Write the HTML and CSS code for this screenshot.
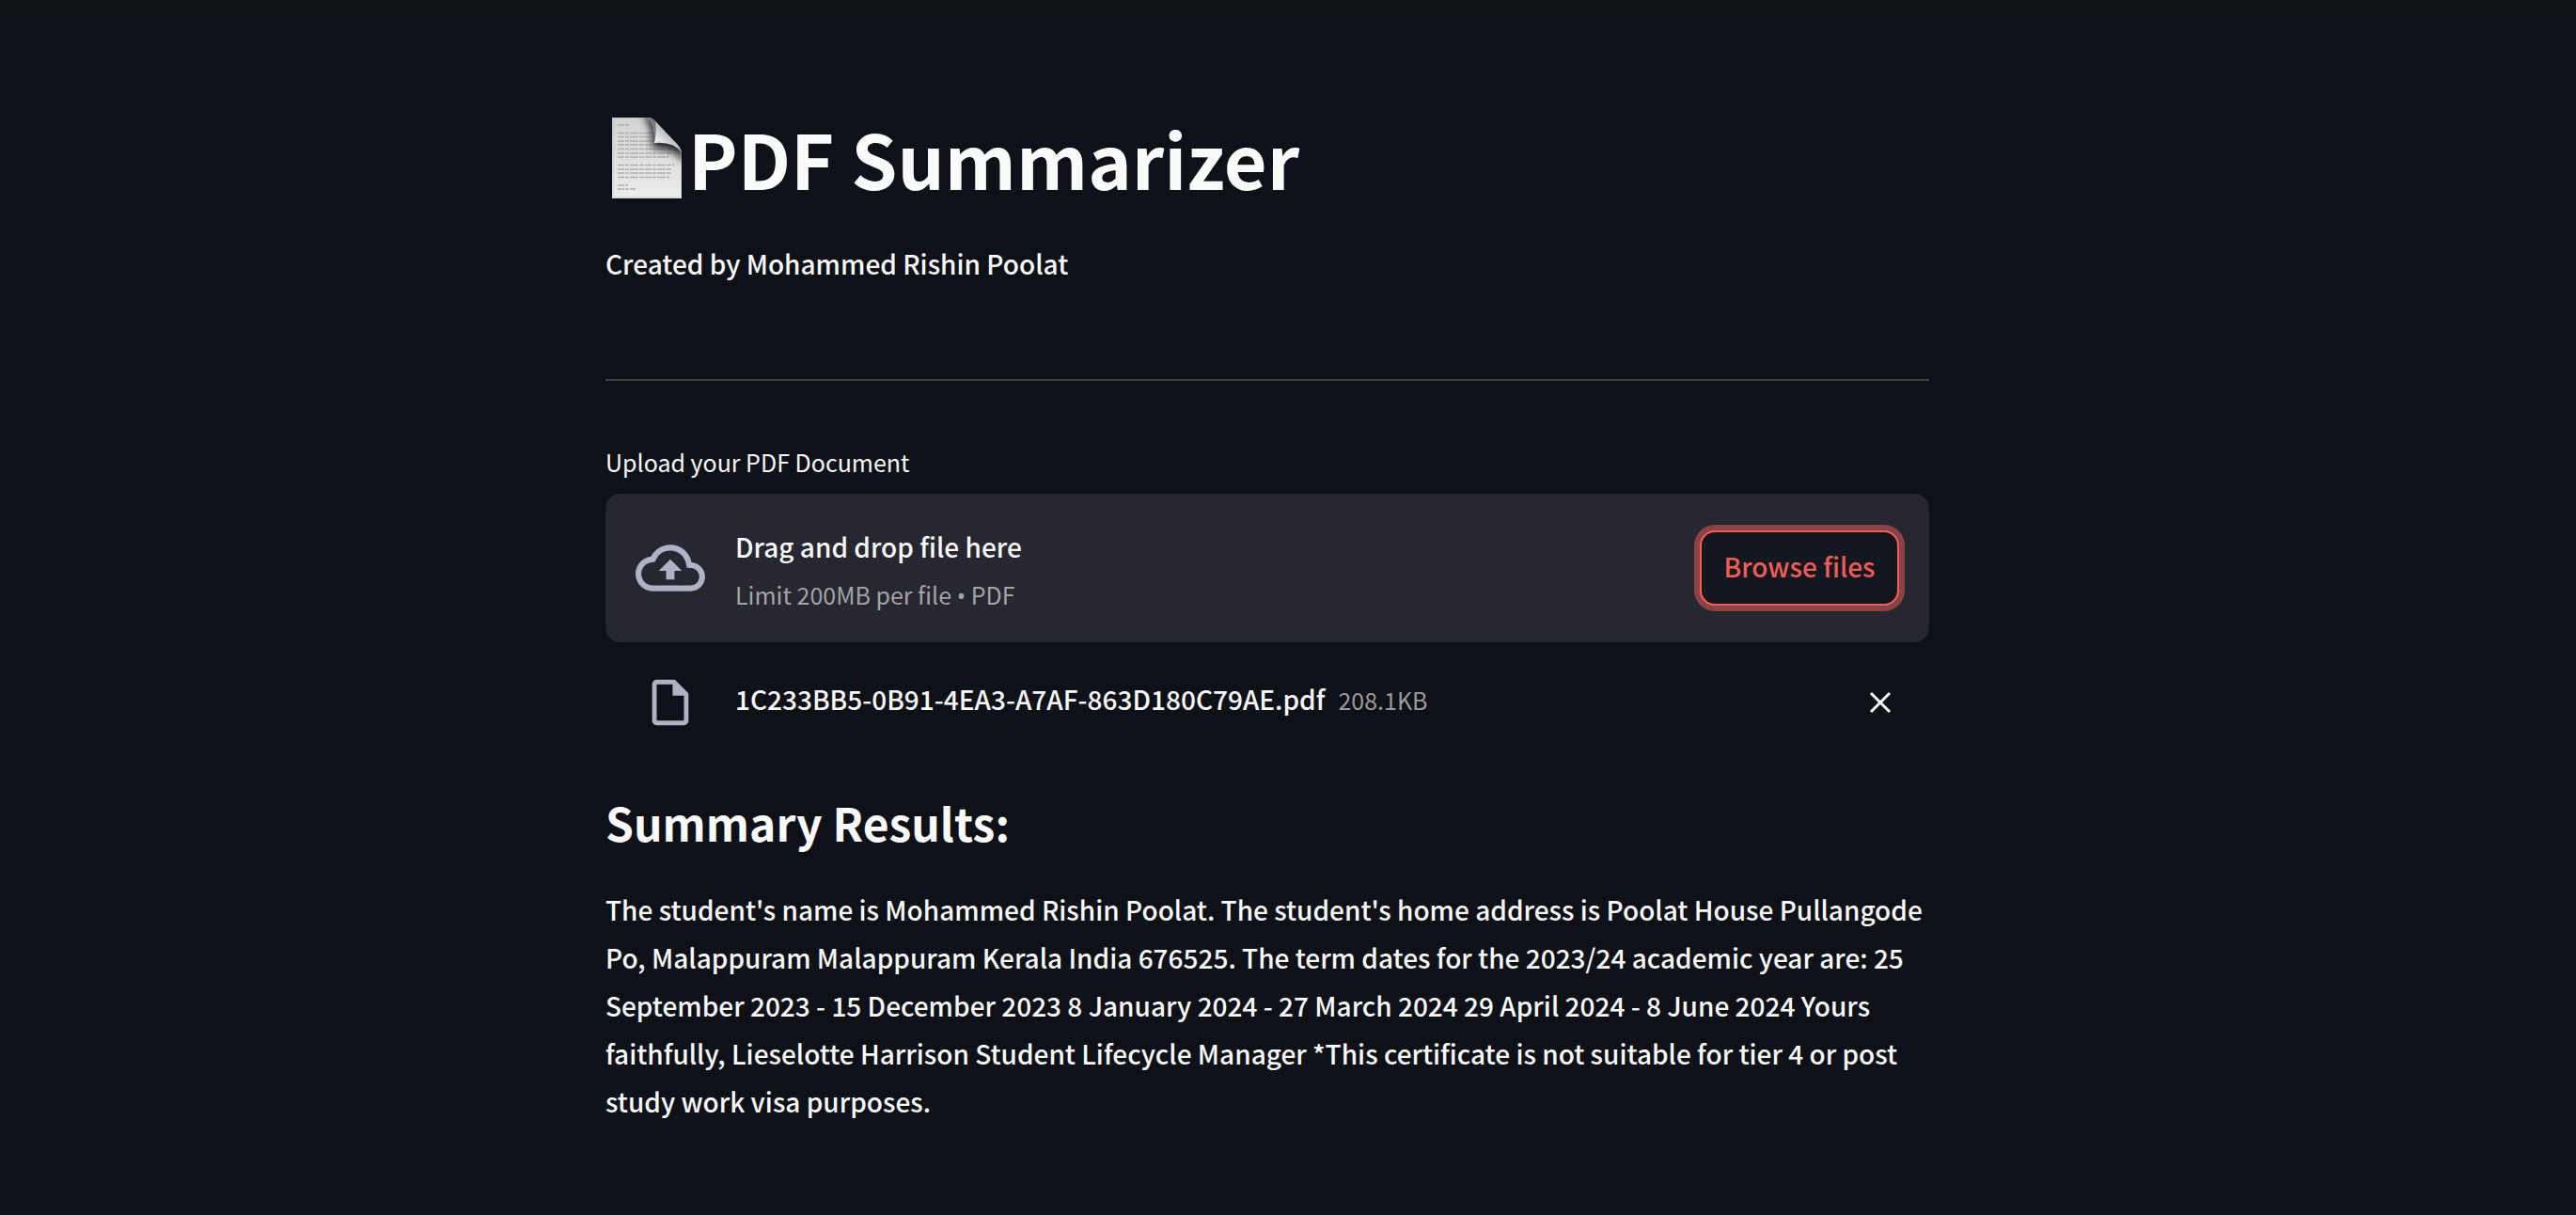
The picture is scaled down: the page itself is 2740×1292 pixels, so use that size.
FILE: index.html
```html
<!DOCTYPE html>
<html lang="en">
<head>
<meta charset="utf-8">
<meta name="viewport" content="width=device-width, initial-scale=1">
<title>PDF Summarizer</title>
<link rel="stylesheet" href="styles.css">
</head>
<body>
<div class="topbar"></div>
<main class="container">
  <h1 class="title">
    <svg class="title-icon" viewBox="0 0 88 88" aria-hidden="true">
      <defs>
        <linearGradient id="paper" x1="0" y1="0" x2="0" y2="1">
          <stop offset="0" stop-color="#d2d2d2"/>
          <stop offset="1" stop-color="#ececec"/>
        </linearGradient>
        <linearGradient id="curl" x1="0" y1="1" x2="0.6" y2="0.4">
          <stop offset="0" stop-color="#fdfdfd"/>
          <stop offset="0.6" stop-color="#e4e4e4"/>
          <stop offset="1" stop-color="#b4b4b4"/>
        </linearGradient>
        <filter id="soft" x="-50%" y="-50%" width="200%" height="200%">
          <feGaussianBlur stdDeviation="4"/>
        </filter>
        <clipPath id="sheet">
          <path d="M7 1H44Q50 1 54 6L76 29Q81 34 81 41V87H7Z"/>
        </clipPath>
      </defs>
      <g clip-path="url(#sheet)">
        <rect x="7" y="1" width="74" height="86" fill="url(#paper)"/>
        <g stroke="#b0b0b0" stroke-width="1.6" stroke-dasharray="7 1 4 1 9 1 5 1">
          <path d="M13 9H25M13 17.500H54M13 21.500H58M13 26H60M13 30H66M13 34.500H72M13 39H70M13 43H67M13 51.500H73M13 56H71M13 60H71M13 64.500H68M13 73H24M13 77H32"/>
        </g>
        <path d="M38 -2Q51 5 50 34Q74 32 84 50V30L54 -2Z" fill="#111" opacity="0.9" filter="url(#soft)"/>
        <rect x="8" y="1" width="73" height="85" fill="none" stroke="#aaa" stroke-width="1" opacity="0.5"/>
      </g>
      <path d="M45 1Q53 7 52 28Q72 26 81 38Q80 33 76 29L54 6Q50 1 45 1Z" fill="url(#curl)"/>
      <path d="M45 1Q53 5 52 28Q55 18 53 5Q50 1 45 1Z" fill="#444" opacity="0.6"/>
    </svg><span>PDF Summarizer</span>
  </h1>
  <p class="text byline">Created by Mohammed Rishin Poolat</p>
  <hr class="divider">

  <section class="uploader">
    <label class="uploader-label" for="pdf-file">Upload your PDF Document</label>
    <input class="file-input" id="pdf-file" type="file" accept="application/pdf" tabindex="-1">
    <div class="dropzone">
      <svg class="cloud-icon" viewBox="0 0 24 24" aria-hidden="true"><path fill="currentColor" d="M19.350 10.040A7.490 7.490 0 0 0 12 4C9.110 4 6.600 5.640 5.350 8.040A5.994 5.994 0 0 0 0 14c0 3.310 2.690 6 6 6h13c2.760 0 5-2.240 5-5 0-2.640-2.050-4.780-4.650-4.960zM19 18H6c-2.210 0-4-1.790-4-4 0-2.050 1.530-3.760 3.560-3.970l1.070-.11.5-.95A5.469 5.469 0 0 1 12 6c2.620 0 4.880 1.860 5.390 4.430l.3 1.500 1.530.11A2.980 2.980 0 0 1 22 15c0 1.650-1.350 3-3 3zM8 13h2.550v3h2.900v-3H16l-4-4z"/></svg>
      <div class="hints">
        <span class="hint-main">Drag and drop file here</span>
        <span class="hint-sub">Limit 200MB per file <span class="bullet">•</span> PDF</span>
      </div>
      <button class="browse" type="button">Browse files</button>
    </div>
    <div class="file-row">
      <svg class="file-icon" viewBox="0 0 24 24" aria-hidden="true"><path fill="currentColor" d="M14 2H6c-1.100 0-2 .9-2 2v16c0 1.100.89 2 1.990 2H18c1.100 0 2-.9 2-2V8l-6-6zM6 20V4h7v5h5v11H6z"/></svg>
      <div class="file-info">
        <span class="file-name">1C233BB5-0B91-4EA3-A7AF-863D180C79AE.pdf</span>
        <span class="file-size">208.1KB</span>
      </div>
      <button class="remove" type="button" aria-label="Remove file">
        <svg viewBox="0 0 24 24" aria-hidden="true"><path d="M2 2L22 22M22 2L2 22" stroke="currentColor" stroke-width="3" fill="none"/></svg>
      </button>
    </div>
  </section>

  <h2 class="subtitle">Summary Results:</h2>
  <p class="text">The student's name is Mohammed Rishin Poolat. The student's home address is Poolat House Pullangode Po, Malappuram Malappuram Kerala India 676525. The term dates for the 2023/24 academic year are: 25 September 2023 - 15 December 2023 8 January 2024 - 27 March 2024 29 April 2024 - 8 June 2024 Yours faithfully, Lieselotte Harrison Student Lifecycle Manager *This certificate is not suitable for tier 4 or post study work visa purposes.</p>
</main>
</body>
</html>
```
FILE: styles.css
```css
* {
  box-sizing: border-box;
}

body {
  margin: 0;
  padding-right: 44px;
  background: #0e1117;
  color: #fafafa;
  font-family: "Noto Sans CJK SC", "Noto Sans", sans-serif;
  font-size: 28px;
  font-weight: 500;
}

.topbar {
  height: 12px;
  margin-right: -44px;
  background: linear-gradient(#111214, #0f1216);
}

.container {
  max-width: 1472px;
  margin: 0 auto;
  padding: 103px 32px 90px;
}

.title {
  display: flex;
  align-items: center;
  margin: 0;
  font-size: 79px;
  line-height: 105px;
  font-weight: 700;
}

.title-icon {
  width: 88px;
  height: 88px;
  flex: none;
}

.text {
  margin: 0;
  line-height: 51px;
}

.byline {
  margin-top: 35px;
}

.divider {
  height: 2px;
  margin: 97px 0 66px;
  border: 0;
  background: #414244;
}

.uploader {
  position: relative;
}

.uploader-label {
  display: block;
  margin-bottom: 14px;
  font-size: 25px;
  line-height: 40px;
  font-weight: 400;
}

.file-input {
  position: absolute;
  width: 1px;
  height: 1px;
  opacity: 0;
}

.dropzone {
  display: flex;
  align-items: center;
  min-height: 158px;
  padding: 24px 32px;
  border-radius: 16px;
  background: #262730;
}

.cloud-icon {
  width: 74px;
  height: 74px;
  margin-right: 32px;
  flex: none;
  color: #afb1c4;
}

.hints {
  display: flex;
  flex-direction: column;
  flex: 1;
  padding-top: 6px;
}

.hint-main {
  line-height: 51px;
}

.hint-sub {
  font-size: 25px;
  line-height: 51px;
  font-weight: 400;
  color: #a3a3a6;
}

.bullet {
  font-family: "Noto Sans", sans-serif;
}

.browse {
  width: 212px;
  height: 80px;
  padding: 0 0 4px;
  border: 2px solid #ff5b55;
  border-radius: 16px;
  background: #131720;
  box-shadow: 0 0 0 6px #8b4244;
  color: #f25c56;
  font: inherit;
  white-space: nowrap;
}

.file-row {
  display: flex;
  align-items: center;
  padding: 35px 40px 0;
}

.file-icon {
  width: 58px;
  height: 58px;
  margin-right: 40px;
  flex: none;
  color: #afb1c4;
}

.file-info {
  display: flex;
  align-items: baseline;
  flex: 1;
  gap: 14px;
  padding-bottom: 6px;
  line-height: 51px;
}

.file-size {
  font-size: 25px;
  font-weight: 400;
  color: #9a9a9c;
}

.remove {
  width: 24px;
  height: 24px;
  padding: 0;
  border: 0;
  background: none;
  color: #fafafa;
}

.remove svg {
  display: block;
  width: 24px;
  height: 24px;
}

.subtitle {
  margin: 64px 0 34px;
  font-size: 48px;
  line-height: 68px;
  font-weight: 700;
}
```
